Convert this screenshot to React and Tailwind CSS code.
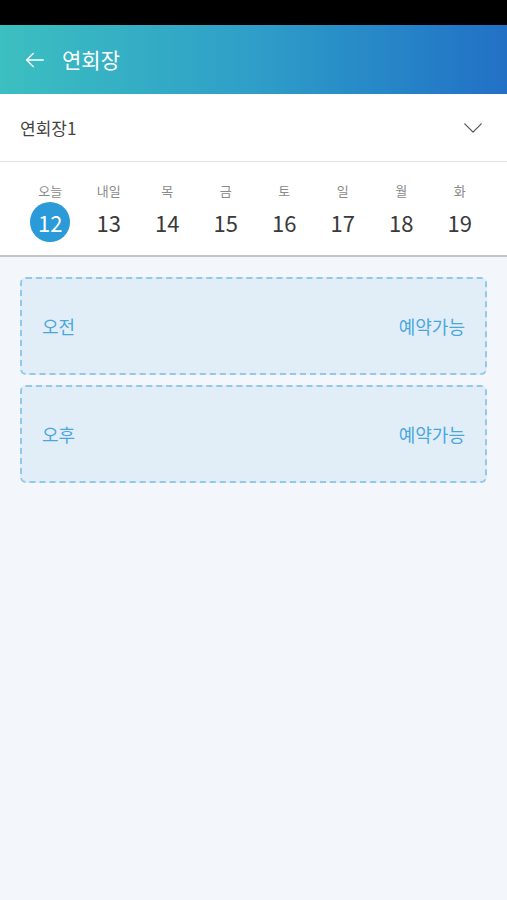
const DAYS = [
  { label: "오늘", day: 12, active: true },
  { label: "내일", day: 13 },
  { label: "목", day: 14 },
  { label: "금", day: 15 },
  { label: "토", day: 16 },
  { label: "일", day: 17 },
  { label: "월", day: 18 },
  { label: "화", day: 19 },
];

const SLOTS = [
  { name: "오전", status: "예약가능" },
  { name: "오후", status: "예약가능" },
];

const font = "font-['Noto_Sans_CJK_KR','Noto_Sans',sans-serif]";

export default function App() {
  return (
    <div className={`min-h-[900px] bg-[#f3f6fa] ${font}`}>
      <div className="h-[25px] bg-black" />

      <header className="h-[69px] flex items-center bg-gradient-to-r from-[#3cbfc0] via-[#2f9ec8] to-[#2270c5] text-white">
        <svg
          className="ml-[24px]"
          width="22"
          height="22"
          viewBox="0 0 24 24"
          fill="none"
          stroke="currentColor"
          strokeWidth="1.6"
          strokeLinecap="round"
          strokeLinejoin="round"
        >
          <path d="M21 12H3" />
          <path d="M10 5l-7 7 7 7" />
        </svg>
        <h1 className="ml-[16px] text-[21px] leading-none font-normal">연회장</h1>
      </header>

      <div className="h-[68px] bg-white flex items-center justify-between px-[20px] border-b border-[#e2e2e2]">
        <span className="text-[17px] text-[#444]">연회장1</span>
        <svg
          className="mr-[3px]"
          width="22"
          height="22"
          viewBox="0 0 24 24"
          fill="none"
          stroke="#555"
          strokeWidth="1.4"
          strokeLinecap="round"
          strokeLinejoin="round"
        >
          <path d="M3 7.5l9 9 9-9" />
        </svg>
      </div>

      <div className="bg-white border-b-2 border-[#c4c4c4] pl-[21px] pr-[18px] pt-[20px] pb-[13px] grid grid-cols-8">
        {DAYS.map((d) => (
          <div key={d.day} className="flex flex-col items-center">
            <span className="text-[13px] leading-[18px] text-[#8a8a8a]">{d.label}</span>
            <span
              className={`mt-[2px] w-[40px] h-[40px] rounded-full flex items-center justify-center text-[22px] leading-none font-normal ${
                d.active ? "bg-[#2a9ad8] text-white" : "text-[#3a3a3a]"
              }`}
            >
              {d.day}
            </span>
          </div>
        ))}
      </div>

      <div className="px-[20px] pt-[20px] flex flex-col gap-[10px]">
        {SLOTS.map((s) => (
          <div
            key={s.name}
            className="h-[98px] rounded-[6px] border-2 border-dashed border-[#92c9ea] bg-[#e1eef8] flex items-center justify-between px-[20px]"
          >
            <span className="text-[18px] text-[#4aa7dc]">{s.name}</span>
            <span className="text-[18px] text-[#4aa7dc]">{s.status}</span>
          </div>
        ))}
      </div>
    </div>
  );
}
